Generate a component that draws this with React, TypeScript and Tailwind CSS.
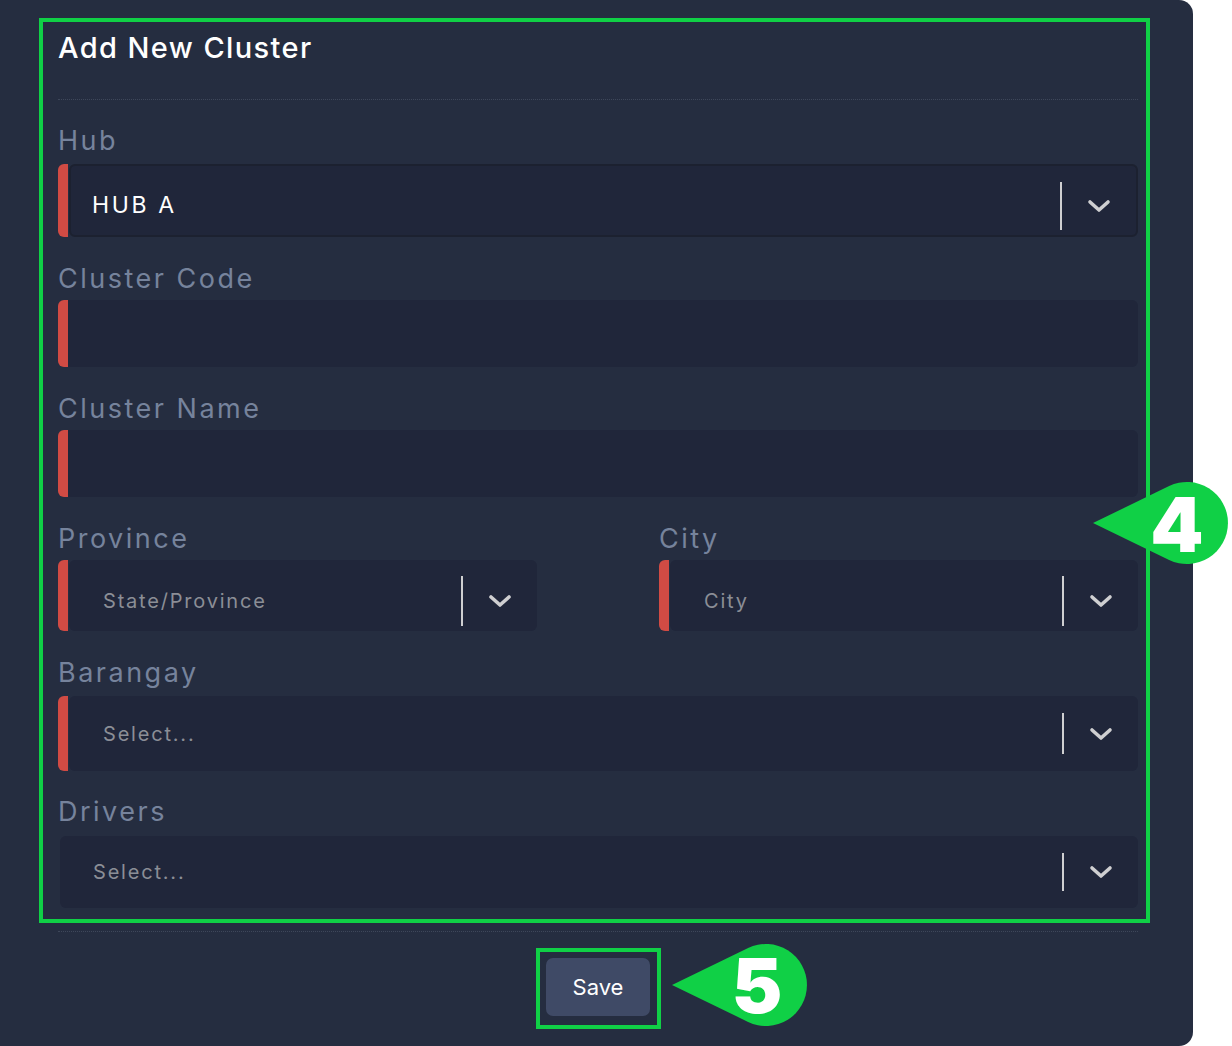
import React from 'react';

const font = { fontFamily: 'Inter, "Noto Sans", sans-serif' };

const Chevron = () => (
  <svg width="24" height="14" viewBox="0 0 24 14" fill="none">
    <polyline
      points="3,3 12,11 21,3"
      stroke="#cfcfd1"
      strokeWidth="3.6"
      strokeLinecap="round"
      strokeLinejoin="round"
    />
  </svg>
);

const Label = ({ children, className = '' }: { children: React.ReactNode; className?: string }) => (
  <div className={`text-[27px] leading-[32px] tracking-[2.5px] text-[#76839c] ${className}`}>{children}</div>
);

type SelectProps = {
  value: string;
  placeholder?: boolean;
  required?: boolean;
  height: string;
  textPad: string;
  bordered?: boolean;
  centered?: boolean;
};

const SelectBox = ({ value, placeholder, required = true, height, textPad, bordered, centered }: SelectProps) => (
  <div className={`flex ${height}`}>
    {required && <div className="w-[10px] shrink-0 bg-[#d14b44] rounded-l-[6px]" />}
    <div
      className={`flex flex-1 rounded-[6px] bg-[#20263a] ${required ? 'ml-[1px]' : 'ml-[2px]'} ${
        bordered ? 'border-2 border-[#1c2130]' : ''
      }`}
    >
      <div
        className={`flex flex-1 items-center ${centered ? '' : 'pt-[10px]'} ${textPad} ${
          placeholder
            ? 'text-[20px] tracking-[1.8px] text-[#8b8e96]'
            : 'text-[23px] tracking-[2.6px] text-white'
        }`}
      >
        {value}
      </div>
      <div className={`w-[2px] bg-[#cfcfd1] ${centered ? 'my-[17px]' : 'mt-[16px] mb-[5px]'}`} />
      <div className={`flex w-[74px] items-center justify-center ${centered ? '' : 'pt-[11px]'}`}>
        <Chevron />
      </div>
    </div>
  </div>
);

const TextBox = () => (
  <div className="flex h-[67px]">
    <div className="w-[10px] shrink-0 bg-[#d14b44] rounded-l-[6px]" />
    <div className="flex-1 bg-[#20263a] rounded-r-[6px]" />
  </div>
);

// teardrop marker pointing left, tip at local (3, h/2)
const Callout = ({ left, top, num, numLeft, numTop }: { left: number; top: number; num: string; numLeft: number; numTop: number }) => (
  <>
    <svg className="absolute" style={{ left, top }} width="142" height="90" viewBox="0 0 142 90">
      <path d="M3 44 L79.1 7.1 A41 41 0 1 1 79.1 80.9 Z" fill="#10d046" />
    </svg>
    <div
      className="absolute w-[60px] text-center text-[76px] leading-none font-black text-white"
      style={{ left: numLeft, top: numTop }}
    >
      {num}
    </div>
  </>
);

export default function App() {
  return (
    <div className="relative w-[1232px] h-[1046px] overflow-hidden bg-white" style={font}>
      <div className="w-[1193px] h-[1046px] bg-[#252d40] rounded-r-[14px] pl-[58px] pr-[55px] pt-[30px]">
        <h1 className="text-[29px] leading-[36px] font-medium tracking-[1.4px] text-white">Add New Cluster</h1>
        <div className="mt-[33px] border-t border-dotted border-[#3e475a]" />

        <Label className="mt-[25px]">Hub</Label>
        <div className="mt-[7px]">
          <SelectBox value="HUB A" height="h-[73px]" textPad="pl-[21px]" bordered />
        </div>

        <Label className="mt-[26px]">Cluster Code</Label>
        <div className="mt-[5px]">
          <TextBox />
        </div>

        <Label className="mt-[26px]">Cluster Name</Label>
        <div className="mt-[5px]">
          <TextBox />
        </div>

        <div className="mt-[26px] grid grid-cols-2 gap-x-[122px]">
          <div>
            <Label>Province</Label>
            <div className="mt-[5px]">
              <SelectBox value="State/Province" placeholder height="h-[71px]" textPad="pl-[34px]" />
            </div>
          </div>
          <div>
            <Label>City</Label>
            <div className="mt-[5px]">
              <SelectBox value="City" placeholder height="h-[71px]" textPad="pl-[34px]" />
            </div>
          </div>
        </div>

        <Label className="mt-[26px]">Barangay</Label>
        <div className="mt-[7px]">
          <SelectBox value="Select..." placeholder height="h-[75px]" textPad="pl-[34px]" centered />
        </div>

        <Label className="mt-[25px]">Drivers</Label>
        <div className="mt-[8px]">
          <SelectBox value="Select..." placeholder required={false} height="h-[72px]" textPad="pl-[33px]" centered />
        </div>

        <div className="mt-[23px] border-t border-dotted border-[#3e475a]" />

        <div className="mt-[26px] flex justify-center">
          <button className="h-[58px] w-[104px] rounded-[7px] bg-[#3f4a66] text-[22px] text-white">Save</button>
        </div>
      </div>

      {/* annotation boxes */}
      <div className="absolute left-[39px] top-[18px] w-[1111px] h-[905px] border-[4px] border-[#10d046]" />
      <div className="absolute left-[536px] top-[948px] w-[125px] h-[81px] border-[4px] border-[#10d046]" />

      <Callout left={1090} top={479} num="4" numLeft={1147} numTop={486} />
      <Callout left={669} top={941} num="5" numLeft={727} numTop={947} />
    </div>
  );
}
